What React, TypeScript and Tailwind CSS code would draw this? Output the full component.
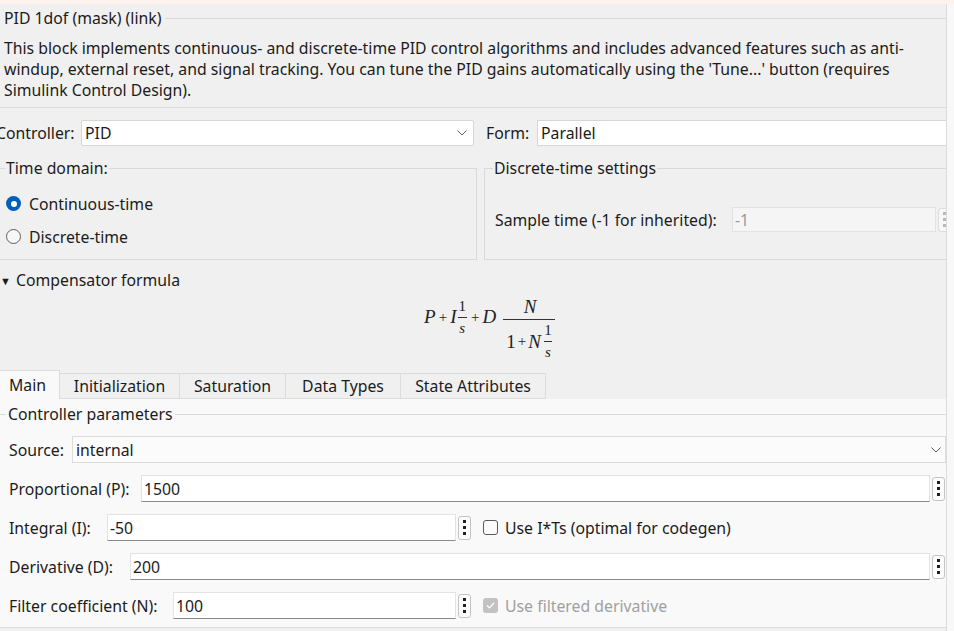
import React from "react";

const Chevron = () => (
  <svg width="10" height="6" viewBox="0 0 10 6" className="shrink-0">
    <polyline points="0.5,0.5 5,5 9.5,0.5" fill="none" stroke="#5c5c5c" strokeWidth="1" />
  </svg>
);

const Ellipsis = () => (
  <div className="w-[13px] h-[24px] ml-[2px] shrink-0 rounded-[3px] border border-[#c4c4c4] bg-[#fcfcfc] flex flex-col items-center justify-center gap-[3px]">
    <span className="w-[3px] h-[3px] bg-[#1f1f1f]" />
    <span className="w-[3px] h-[3px] bg-[#1f1f1f]" />
    <span className="w-[3px] h-[3px] bg-[#1f1f1f]" />
  </div>
);

const Frac = ({ num, den, small = false }: { num: React.ReactNode; den: React.ReactNode; small?: boolean }) => (
  <span className={`inline-flex flex-col items-center leading-none mx-[1px] ${small ? "text-[15px]" : ""}`}>
    <span className="px-[1px]">{num}</span>
    <span className="h-px w-full bg-[#333] my-[3px]" />
    <span className="px-[1px]">{den}</span>
  </span>
);

const TextField = ({ value, className = "" }: { value: string; className?: string }) => (
  <div className={`h-[27px] bg-white border border-[#e3e3e3] border-b-[#8a8a8a] flex items-center px-[2px] ${className}`}>
    {value}
  </div>
);

const Row = ({ label, labelW, children }: { label: string; labelW: string; children: React.ReactNode }) => (
  <div className="flex items-center h-[27px]">
    <div className={`${labelW} shrink-0 whitespace-nowrap`}>{label}</div>
    {children}
  </div>
);

export default function App() {
  return (
    <div className="w-[954px] h-[631px] overflow-hidden bg-[#f0f0f0] text-[#1b1b1b] text-[15.8px] font-['Noto_Sans',sans-serif] flex flex-col">
      <div className="h-[4px] bg-[#fcf2ee] shrink-0" />
      <div className="flex flex-1 min-h-0">
        <div className="w-[947px] shrink-0 border-r border-[#dcdcdc] overflow-hidden flex flex-col">
          {/* Title block */}
          <div className="border-b border-[#dcdcdc] pb-[6px]">
            <div className="flex items-center pl-[4px] pt-[4px] leading-[20px]">
              <span>PID 1dof (mask) (link)</span>
              <span className="ml-[4px] flex-1 h-px bg-[#dadada]" />
            </div>
            <p className="pl-[4px] mt-[10px] leading-[21px] whitespace-nowrap">
              This block implements continuous- and discrete-time PID control algorithms and includes advanced features such as anti-
              <br />
              windup, external reset, and signal tracking. You can tune the PID gains automatically using the 'Tune...' button (requires
              <br />
              Simulink Control Design).
            </p>
          </div>

          {/* Controller / Form */}
          <div className="flex items-center mt-[12px] h-[26px] leading-[20px]">
            <div className="w-[85px] -ml-[4px] shrink-0 whitespace-nowrap">Controller:</div>
            <div className="w-[393px] h-[26px] bg-white border border-[#d6d6d6] rounded-[2px] flex items-center justify-between pl-[3px] pr-[6px]">
              <span>PID</span>
              <Chevron />
            </div>
            <div className="w-[51px] ml-[12px] shrink-0">Form:</div>
            <div className="flex-1 h-[26px] -mr-[4px] bg-white border border-[#d6d6d6] flex items-center pl-[3px]">Parallel</div>
          </div>

          {/* Fieldsets */}
          <div className="flex mt-[12px] leading-[20px]">
            <fieldset className="w-[479px] -ml-[2px] shrink-0 border border-[#d9d9d9] pt-[9px] pb-[6px]">
              <legend className="ml-[6px] px-[1px] leading-[20px]">Time domain:</legend>
              <div className="h-[33px] flex items-center pl-[7px]">
                <span className="w-[15px] h-[15px] rounded-full bg-[#005fb8] flex items-center justify-center">
                  <span className="w-[6px] h-[6px] rounded-full bg-white" />
                </span>
                <span className="ml-[8px]">Continuous-time</span>
              </div>
              <div className="h-[33px] flex items-center pl-[7px]">
                <span className="w-[15px] h-[15px] rounded-full border border-[#5f5f5f] bg-[#f7f7f7]" />
                <span className="ml-[8px]">Discrete-time</span>
              </div>
            </fieldset>
            <fieldset className="flex-1 ml-[7px] -mr-[20px] border border-[#d9d9d9] pt-[29px] pb-[26px]">
              <legend className="ml-[8px] px-[1px] leading-[20px]">Discrete-time settings</legend>
              <div className="flex items-center pl-[10px] h-[25px]">
                <span className="w-[237px] shrink-0 whitespace-nowrap">Sample time (-1 for inherited):</span>
                <div className="w-[204px] h-[25px] bg-[#f5f5f5] border border-[#e2e2e2] text-[#9a9a9a] flex items-center pl-[2px]">-1</div>
                <div className="w-[13px] h-[24px] ml-[2px] rounded-[3px] border border-[#dcdcdc] bg-[#f7f7f7] flex flex-col items-center justify-center gap-[3px]">
                  <span className="w-[3px] h-[3px] bg-[#b8b8b8]" />
                  <span className="w-[3px] h-[3px] bg-[#b8b8b8]" />
                  <span className="w-[3px] h-[3px] bg-[#b8b8b8]" />
                </div>
              </div>
            </fieldset>
          </div>

          {/* Compensator formula */}
          <div className="flex items-center mt-[10px] leading-[20px]">
            <span className="text-[11px] w-[16px] leading-none">▼</span>
            <span>Compensator formula</span>
          </div>
          <div className="h-[80px] flex items-start justify-center pl-[34px] pt-[7px] font-['Liberation_Serif',serif] italic text-[19px] text-[#222]">
            <span className="flex items-center mt-[2px]">
              <span>P</span>
              <span className="not-italic mx-[3px] text-[15px]">+</span>
              <span>I</span>
              <Frac small num={<span className="not-italic">1</span>} den="s" />
              <span className="not-italic mx-[3px] text-[15px]">+</span>
              <span className="mr-[6px]">D</span>
            </span>
            <Frac
              num={<span className="text-[19px] pl-[2px]">N</span>}
              den={
                <span className="inline-flex items-center px-[2px]">
                  <span className="not-italic">1</span>
                  <span className="not-italic text-[15px] mx-[2px]">+</span>
                  <span>N</span>
                  <span className="inline-flex flex-col items-center text-[15px] leading-none ml-[3px]">
                    <span className="not-italic">1</span>
                    <span className="h-px w-[8px] bg-[#333] my-[3px]" />
                    <span>s</span>
                  </span>
                </span>
              }
            />
          </div>

          {/* Tabs */}
          <div className="flex items-end h-[29px] leading-[20px]">
            <div className="w-[60px] h-[29px] bg-[#f9f9f9] border-t border-r border-[#dcdcdc] flex items-center pl-[9px]">Main</div>
            <div className="w-[120px] h-[26px] border-t border-r border-b border-[#dcdcdc] flex items-center justify-center">Initialization</div>
            <div className="w-[106px] h-[26px] border-t border-r border-b border-[#dcdcdc] flex items-center justify-center">Saturation</div>
            <div className="w-[115px] h-[26px] border-t border-r border-b border-[#dcdcdc] flex items-center justify-center">Data Types</div>
            <div className="w-[145px] h-[26px] border-t border-r border-b border-[#dcdcdc] flex items-center justify-center">State Attributes</div>
          </div>

          {/* Tab panel */}
          <div className="flex-1 bg-[#f9f9f9] border-b border-[#dcdcdc] mb-[3px] leading-[20px]">
            <fieldset className="border-t border-[#dcdcdc] mt-[5px]">
              <legend className="ml-[6px] px-[2px] leading-[20px]">Controller parameters</legend>
              <div className="flex flex-col gap-[12px] pl-[9px] mt-[12px]">
                <Row label="Source:" labelW="w-[63px]">
                  <div className="flex-1 h-[27px] bg-[#fbfbfb] border border-[#dcdcdc] flex items-center justify-between pl-[3px] pr-[4px]">
                    <span>internal</span>
                    <Chevron />
                  </div>
                </Row>
                <Row label="Proportional (P):" labelW="w-[132px]">
                  <TextField value="1500" className="flex-1" />
                  <Ellipsis />
                  <span className="w-px" />
                </Row>
                <Row label="Integral (I):" labelW="w-[98px]">
                  <TextField value="-50" className="w-[349px]" />
                  <Ellipsis />
                  <span className="ml-[12px] w-[15px] h-[15px] rounded-[3px] border border-[#5a5a5a] bg-[#fbfbfb]" />
                  <span className="ml-[7px] whitespace-nowrap">Use I*Ts (optimal for codegen)</span>
                </Row>
                <Row label="Derivative (D):" labelW="w-[121px]">
                  <TextField value="200" className="flex-1" />
                  <Ellipsis />
                  <span className="w-px" />
                </Row>
                <Row label="Filter coefficient (N):" labelW="w-[164px]">
                  <TextField value="100" className="w-[283px]" />
                  <Ellipsis />
                  <span className="ml-[12px] w-[15px] h-[15px] rounded-[3px] bg-[#c2c2c2] flex items-center justify-center">
                    <svg width="9" height="7" viewBox="0 0 9 7">
                      <polyline points="1,3.5 3.5,6 8,1" fill="none" stroke="#fff" strokeWidth="1.2" />
                    </svg>
                  </span>
                  <span className="ml-[7px] whitespace-nowrap text-[#a0a0a0]">Use filtered derivative</span>
                </Row>
              </div>
            </fieldset>
          </div>
        </div>
        <div className="flex-1 bg-[#f8f8f8]" />
      </div>
    </div>
  );
}
